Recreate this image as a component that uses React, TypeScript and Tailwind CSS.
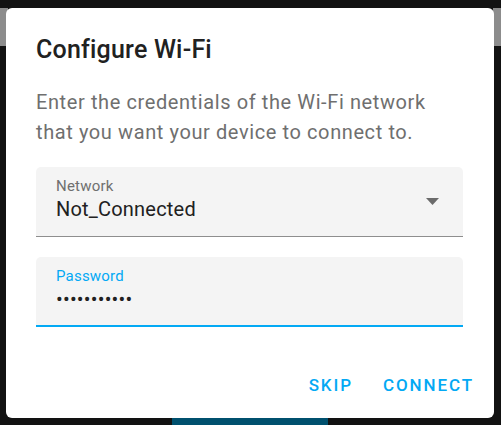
export default function App() {
  return (
    <div
      className="relative w-[501px] h-[425px] bg-[#121212] overflow-hidden"
      style={{ fontFamily: 'Roboto, "Noto Sans", sans-serif' }}
    >
      {/* background page bits peeking out */}
      <div className="absolute left-0 top-[8px] w-[8px] h-[38px] bg-[#8c8c8c]" />
      <div className="absolute right-0 top-[8px] w-[8px] h-[38px] bg-[#8c8c8c]" />
      <div className="absolute left-[172px] top-[418px] w-[156px] h-[7px] bg-[#00506e]" />

      <div className="absolute left-[6px] top-[8px] w-[488px] h-[410px] bg-white rounded-[6px] flex flex-col pl-[30px] pr-[31px]">
        <h2 className="mt-[26px] text-[25px] leading-[32px] font-medium text-[#212121] tracking-[0.2px]">
          Configure Wi-Fi
        </h2>
        <p className="mt-[21px] text-[20px] leading-[30px] text-[#6f6f6f] tracking-[0.6px]">
          Enter the credentials of the Wi-Fi network that you want your device to connect to.
        </p>

        <div className="mt-[20px] relative h-[70px] bg-[#f4f4f4] rounded-t-[5px] border-b border-[#8e8e8e] px-[20px] pt-[10px]">
          <div className="text-[15px] leading-[18px] text-[#6f6f6f] tracking-[0.2px]">Network</div>
          <div className="mt-[2px] text-[20px] leading-[24px] text-[#212121] tracking-[0.2px]">Not_Connected</div>
          <svg
            className="absolute right-[24px] top-[31px]"
            width="13"
            height="7"
            viewBox="0 0 13 7"
          >
            <path d="M0 0h13L6.5 7z" fill="#6b6b6b" />
          </svg>
        </div>

        <div className="mt-[20px] relative h-[70px] bg-[#f4f4f4] rounded-t-[5px] border-b-2 border-[#03a9f4] px-[20px] pt-[10px]">
          <div className="text-[15px] leading-[18px] text-[#03a9f4] tracking-[0.2px]">Password</div>
          <div className="mt-[2px] text-[20px] leading-[24px] text-[#212121] tracking-[0.2px]">•••••••••••</div>
        </div>

        <div className="mt-[48px] flex justify-end gap-[30px] mr-[-11px]">
          <button className="text-[17px] leading-[20px] font-medium tracking-[1.9px] text-[#03a9f4]">
            SKIP
          </button>
          <button className="text-[17px] leading-[20px] font-medium tracking-[1.9px] text-[#03a9f4]">
            CONNECT
          </button>
        </div>
      </div>
    </div>
  );
}
